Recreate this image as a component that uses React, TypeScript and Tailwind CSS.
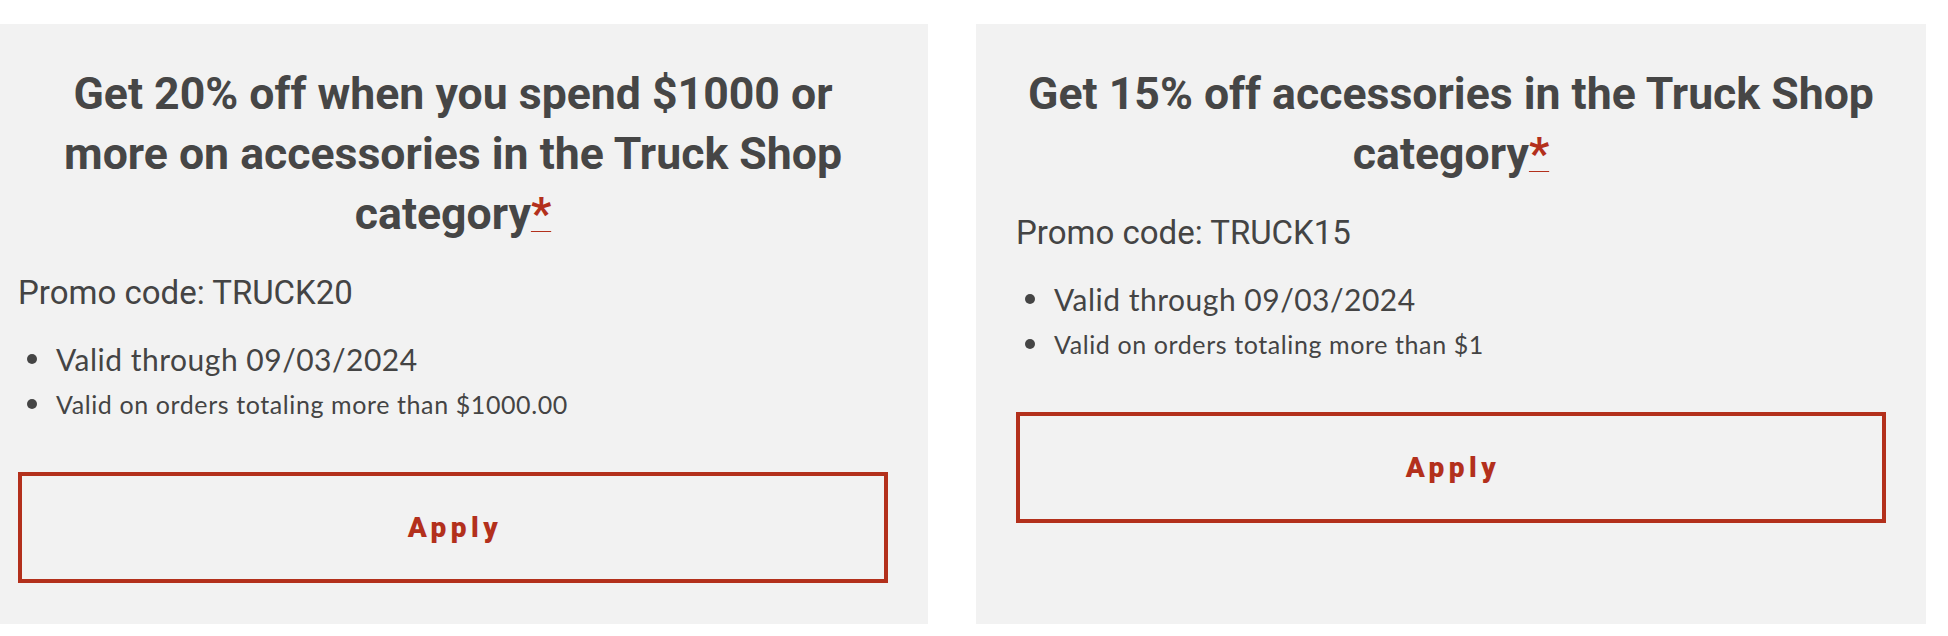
import React from "react";

const heading = "font-['Roboto',sans-serif] font-bold text-[44.6px] leading-[60px] text-[#464646] text-center whitespace-nowrap";
const promo = "font-['Roboto',sans-serif] text-[33px] leading-[36px] text-[#444444]";

function Asterisk() {
  return (
    <a className="text-[#b3301c] underline decoration-1 underline-offset-[2px]" href="#">
      *
    </a>
  );
}

function Bullet({ children, big }: { children: React.ReactNode; big?: boolean }) {
  return (
    <li className="flex items-center">
      <span className="w-[38px] flex items-center pl-[9px] shrink-0">
        <span className="block w-[10px] h-[10px] rounded-full bg-[#454545]" />
      </span>
      <span
        className={
          big
            ? "font-['Lato',sans-serif] text-[30px] leading-[40px] tracking-[0.5px] text-[#444444]"
            : "font-['Lato',sans-serif] text-[25px] leading-[32px] tracking-[0.6px] text-[#444444]"
        }
      >
        {children}
      </span>
    </li>
  );
}

function ApplyButton() {
  return (
    <button className="mt-[52px] w-full h-[111px] border-[4px] border-[#b3301c] flex items-center justify-center bg-transparent">
      <span className="font-['Roboto',sans-serif] font-black text-[28px] tracking-[4.5px] pl-[4px] text-[#b3301c]">
        Apply
      </span>
    </button>
  );
}

function Card({
  lines,
  code,
  minimum,
}: {
  lines: string[];
  code: string;
  minimum: string;
}) {
  return (
    <div className="w-[950px] shrink-0 bg-[#f2f2f2] pt-[40px] px-[40px] pb-[41px] flex flex-col">
      <h2 className={heading}>
        {lines.map((l, i) => (
          <React.Fragment key={i}>
            {l}
            {i === lines.length - 1 ? <Asterisk /> : <br />}
          </React.Fragment>
        ))}
      </h2>
      <p className={promo + " mt-[31px]"}>Promo code: {code}</p>
      <ul className="mt-[28px] flex flex-col gap-[9px]">
        <Bullet big>Valid through 09/03/2024</Bullet>
        <Bullet>Valid on orders totaling more than {minimum}</Bullet>
      </ul>
      <ApplyButton />
    </div>
  );
}

export default function App() {
  return (
    <div className="w-[1948px] h-[636px] bg-white overflow-hidden pt-[24px]">
      <div className="flex items-stretch gap-[48px] ml-[-22px]">
        <Card
          lines={["Get 20% off when you spend $1000 or", "more on accessories in the Truck Shop", "category"]}
          code="TRUCK20"
          minimum="$1000.00"
        />
        <Card
          lines={["Get 15% off accessories in the Truck Shop", "category"]}
          code="TRUCK15"
          minimum="$1"
        />
      </div>
    </div>
  );
}
